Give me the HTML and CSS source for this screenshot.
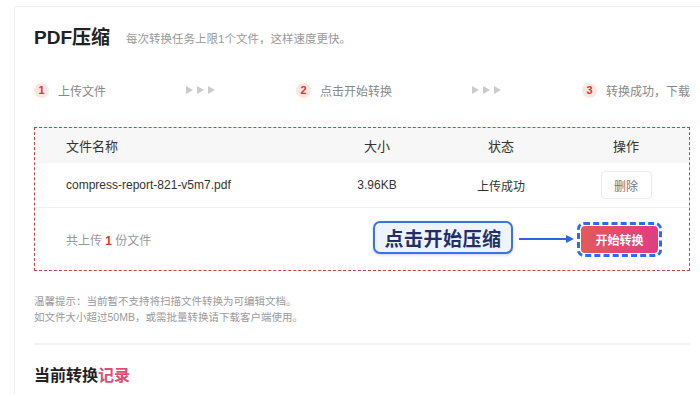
FILE: index.html
```html
<!DOCTYPE html>
<html lang="zh-CN">
<head>
<meta charset="utf-8">
<title>PDF压缩</title>
<link rel="stylesheet" href="styles.css">
</head>
<body>
<div class="card">
  <div class="head">
    <h1 class="title">PDF压缩</h1>
    <span class="sub">每次转换任务上限1个文件，这样速度更快。</span>
  </div>

  <div class="steps">
    <div class="step"><span class="num">1</span><span class="label">上传文件</span></div>
    <svg class="arrows" width="30" height="10" viewBox="0 0 30 10"><polygon points="0,1 7,5 0,9"/><polygon points="11,1 18,5 11,9"/><polygon points="22,1 29,5 22,9"/></svg>
    <div class="step"><span class="num">2</span><span class="label">点击开始转换</span></div>
    <svg class="arrows" width="30" height="10" viewBox="0 0 30 10"><polygon points="0,1 7,5 0,9"/><polygon points="11,1 18,5 11,9"/><polygon points="22,1 29,5 22,9"/></svg>
    <div class="step"><span class="num">3</span><span class="label">转换成功，下载</span></div>
  </div>

  <div class="box">
    <div class="row thead">
      <div class="c-name">文件名称</div>
      <div class="c-mid">大小</div>
      <div class="c-mid">状态</div>
      <div class="c-mid">操作</div>
    </div>
    <div class="row tbody">
      <div class="c-name">compress-report-821-v5m7.pdf</div>
      <div class="c-mid">3.96KB</div>
      <div class="c-mid">上传成功</div>
      <div class="c-mid"><button class="del">删除</button></div>
    </div>
    <div class="foot">
      <span class="count">共上传 <b>1</b> 份文件</span>
      <div class="action">
        <div class="callout">点击开始压缩</div>
        <svg class="pointer" width="56" height="10" viewBox="0 0 56 10"><line x1="0" y1="5" x2="49" y2="5"/><polygon points="47,1 55,5 47,9"/></svg>
        <div class="focus"><button class="start">开始转换</button></div>
      </div>
    </div>
  </div>

  <div class="tips">
    <p>温馨提示：当前暂不支持将扫描文件转换为可编辑文档。</p>
    <p>如文件大小超过50MB，或需批量转换请下载客户端使用。</p>
  </div>

  <div class="sep"></div>

  <h2 class="rec">当前转换<em>记录</em></h2>
</div>
</body>
</html>
```

FILE: styles.css
```css
* { box-sizing: border-box; }

html, body {
  margin: 0;
  padding: 0;
  background: #fff;
  overflow: hidden;
}

body {
  font-family: "Liberation Sans", "Noto Sans CJK SC", sans-serif;
  color: #333;
  width: 700px;
  height: 395px;
}

.card {
  margin: 6px 0 0 14px;
  width: 686px;
  height: 389px;
  overflow: hidden;
  border-top: 1px solid #efefef;
  border-left: 1px solid #efefef;
  padding: 17px 0 0 19px;
}

.head {
  display: flex;
  align-items: center;
  height: 28px;
  gap: 16px;
}

.title {
  margin: 0;
  font-size: 19px;
  font-weight: bold;
  color: #222;
  line-height: 28px;
}

.sub {
  font-size: 11.5px;
  color: #999;
}

.steps {
  margin-top: 28px;
  width: 656px;
  height: 20px;
  overflow: hidden;
  display: flex;
  align-items: center;
  gap: 80px;
  white-space: nowrap;
}

.step {
  display: flex;
  align-items: center;
  gap: 9px;
  flex: none;
}

.num {
  width: 15px;
  height: 15px;
  border-radius: 50%;
  background: #fbe6e1;
  color: #d33a36;
  font-size: 11px;
  font-weight: bold;
  display: flex;
  align-items: center;
  justify-content: center;
}

.label {
  font-size: 12px;
  color: #888;
}

.arrows { fill: #cbcbcb; flex: none; }

.box {
  margin-top: 27px;
  width: 656px;
  border: 1px dashed #cf3f42;
}

.row {
  display: grid;
  grid-template-columns: 280px 124px 124px 1fr;
  align-items: center;
}

.c-name { padding-left: 31px; }
.c-mid { text-align: center; }

.thead {
  height: 35px;
  background: #f7f7f7;
  font-size: 13px;
  color: #333;
}

.tbody {
  height: 45px;
  border-bottom: 1px solid #f0f0f0;
  font-size: 12px;
  color: #333;
}

.del {
  width: 51px;
  height: 28px;
  border: 1px solid #ebebeb;
  border-radius: 4px;
  background: #fff;
  color: #777;
  font-family: inherit;
  font-size: 12px;
  padding: 0;
}

.foot {
  height: 62px;
  display: flex;
  align-items: center;
  padding: 0 27px 0 31px;
}

.count {
  font-size: 12px;
  color: #999;
}

.count b { color: #d33a36; }

.action {
  margin-left: auto;
  display: flex;
  align-items: center;
}

.callout {
  width: 140px;
  height: 33px;
  margin-top: -3px;
  border: 2px solid #3b73e3;
  border-radius: 7px;
  background: #eef3fc;
  box-shadow: 0 1px 3px rgba(40, 80, 180, 0.25);
  color: #1f2f6b;
  font-size: 19px;
  font-weight: bold;
  display: flex;
  align-items: center;
  justify-content: center;
  letter-spacing: 0.5px;
}

.pointer {
  margin: 0 2px 0 6px;
  flex: none;
}
.pointer line { stroke: #2f65d8; stroke-width: 2; }
.pointer polygon { fill: #2f65d8; }

.focus {
  border: 3px dashed #2b6cf0;
  border-radius: 7px;
  padding: 1px;
  display: flex;
}

.start {
  width: 77px;
  height: 27px;
  border: none;
  border-radius: 4px;
  background: linear-gradient(90deg, #e4595b, #e23c82);
  color: #fff;
  font-family: inherit;
  font-size: 12px;
  font-weight: bold;
  padding: 0;
}

.tips {
  margin-top: 22px;
  font-size: 10.5px;
  color: #9a9a9a;
  line-height: 16px;
}

.tips p { margin: 0; }

.sep {
  margin-top: 18px;
  width: 656px;
  height: 2px;
  background: #f3f3f3;
}

.rec {
  margin: 19px 0 0;
  font-size: 16px;
  font-weight: bold;
  line-height: 24px;
  color: #222;
}

.rec em {
  font-style: normal;
  color: #e44b74;
}
```
